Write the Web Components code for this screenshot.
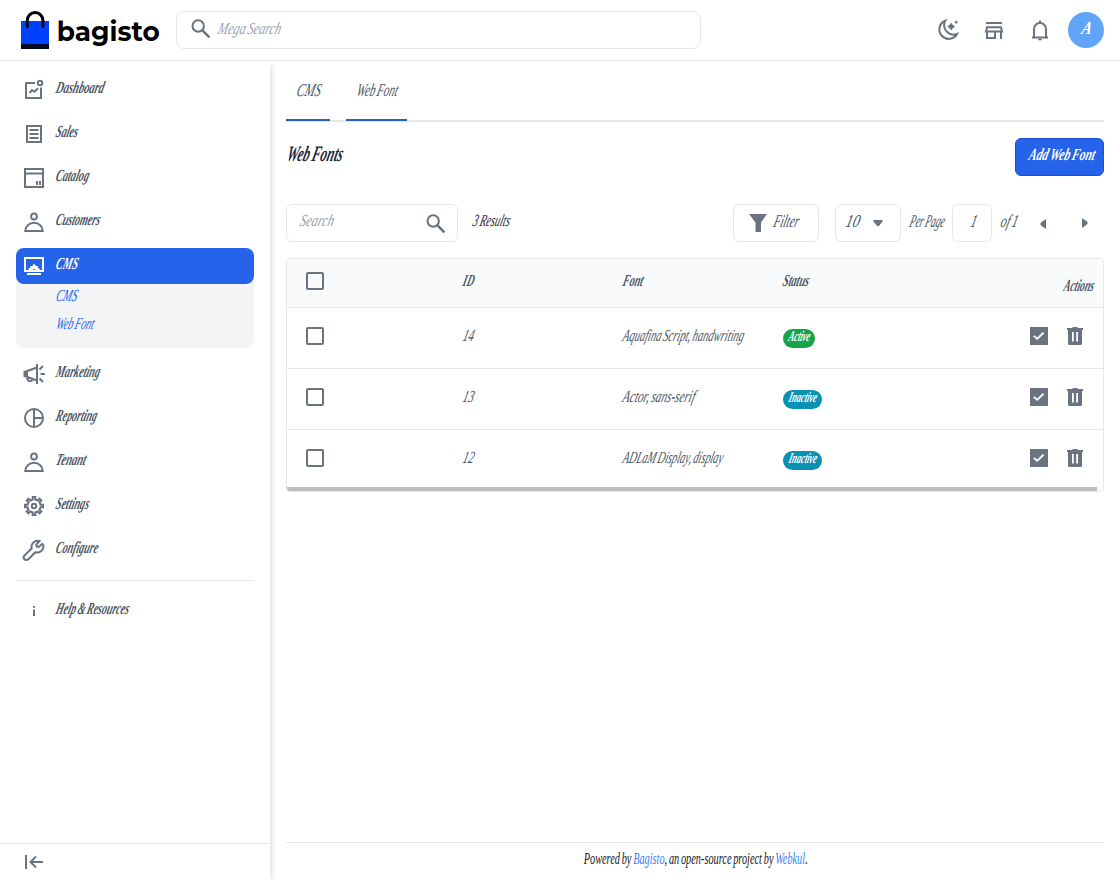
<!DOCTYPE html>
<html lang="en">
<head>
  <meta charset="utf-8">
  <title>Web Fonts</title>
  <style>
    body {
      margin: 0;
      background: #fff;
      color: #4b5563;
      font: italic 17px/24px "Aquafina Script", "Liberation Serif", serif;
    }
  </style>
</head>
<body>
  <admin-page></admin-page>

  <script>
    // icon shapes, all on a 24x24 grid
    const ICONS = {
      search: '<circle cx="9.2" cy="9" r="5.7"/><path d="M13.2 13.2 20.400 20.400" stroke-width="2.600"/>',
      moon: '<path d="M9.200 2.800A9.400 9.400 0 1 0 21 16 9.500 9.500 0 0 1 9.200 2.800z"/><path class="f" d="M15.200 4.600l1.600 2.400 2.400 1.600-2.400 1.600-1.600 2.400-1.600-2.400-2.400-1.600L13.600 7zM20.200 2.600l1.700 1.700-1.700 1.700-1.700-1.700z"/>',
      store: '<path d="M4 5h16M5 9.300h14l1 4.200H4zM5 13.500V20h8v-6.500M19 13.500V21"/>',
      bell: '<path d="M4 19.500h16M6 19.500V11a6 6 0 0 1 12 0v8.500M12 2.500V5"/><path class="f" d="M10 20.800h4a2 1.800 0 0 1-4 0z"/>',
      dashboard: '<path d="M13 5H4.500a.5.500 0 0 0-.5.500V20h15V9.500"/><circle cx="18" cy="5" r="2.200"/><path d="M7.500 15 10 12l2.500 1.800 3.500-3.600"/>',
      sales: '<path d="M5 4h14v16H5zM7.500 8h9M7.500 12h9M7.500 16h9"/>',
      catalog: '<path d="M3 3h18v18H3zM3 7.500h18M15 15v4M18 15v4"/>',
      customers: '<circle cx="12" cy="6.500" r="2.900"/><path d="M3.200 21a8.800 8.200 0 0 1 17.600 0z"/>',
      cms: '<path d="M3 4h18v13H3zM5 20h14"/><path class="f" d="M6.500 16.500v-2l1.500-.8.500-1.700h2l.8-1.700h1.600l.8 1.700h2l.3 1.700 1.500.8v2h-4a1.500 1.500 0 0 0-3 0z"/>',
      marketing: '<path d="M15 2v20M15 5.500 2.500 10v4L15 18.500M5.500 15v2.500c1 2.400 4 2.400 5 0M17.500 7.500 21 4M18.500 12H23M17.500 16.500 21 20"/><path class="f" d="M2 9.500h4v5H2z"/>',
      reporting: '<circle cx="12" cy="12" r="9"/><path d="M12 3v18M12 12h9"/>',
      settings: '<path d="M10.700 3h2.600v2.500l2.500 1L17.600 4.700l1.700 1.700-1.800 1.800 1 2.500H21v2.600h-2.500l-1 2.500 1.800 1.800-1.700 1.700-1.800-1.800-2.500 1V21h-2.600v-2.500l-2.500-1-1.800 1.800-1.700-1.700 1.800-1.800-1-2.500H3v-2.600h2.500l1-2.500L4.700 6.400l1.700-1.700 1.800 1.800 2.500-1z"/><circle cx="12" cy="12" r="2.200"/>',
      configure: '<path d="M20.300 5.800 16.800 9 14.700 8.600 14.300 6.600 17.600 3A6.200 6.200 0 0 0 9.700 10.500L2.500 17.500a2.600 2.600 0 0 0 3.800 3.800L13.400 14.200A6.200 6.200 0 0 0 21.400 8.800c.3-1.500.2-2.400-1.100-3z"/>',
      help: '<path class="f" d="M11 8h2v1.700h-2zM11 11.500h2V18h-2z"/>',
      collapse: '<path d="M4 5v14M8.500 12H21M14 6.500 8.500 12l5.500 5.500"/>',
      filter: '<path class="f" d="M3 3h18l-6 8.500V21H9.500v-9.500z"/>',
      down: '<path class="f" d="M7.500 8h9v1.500L13 14h-2L7.500 9.500z"/>',
      left: '<path class="f" d="M15 7.500v9h-1L9.500 13v-2L14 7.500z"/>',
      right: '<path class="f" d="M9 7.500v9h1l4.500-3.500v-2L10 7.500z"/>',
      edit: '<path class="f" fill-rule="evenodd" d="M3 3h18v18H3zM7.400 11.200l-1.200 1.400 4 3.500 7-6.600-1.300-1.500-5.700 5.400z"/>',
      trash: '<path class="f" fill-rule="evenodd" d="M9.500 3h5v1H20v2h-1v13.500q0 1.500-1.500 1.500h-11Q5 21 5 19.500V6H4V4h5.500zM9 8v9.500h1.800V8zM13.200 8v9.500H15V8z"/>'
    };

    class BgIcon extends HTMLElement {
      constructor() {
        super();
        this.attachShadow({ mode: 'open' }).innerHTML = `
          <style>
            :host { display: block; flex: none; width: 24px; height: 24px; color: var(--icon, #6b7280); }
            svg { display: block; fill: none; stroke: currentColor; stroke-width: 2; }
            .f { fill: currentColor; stroke: none; }
          </style>
          <svg width="24" height="24" viewBox="0 0 24 24">${ICONS[this.getAttribute('name')] || ''}</svg>`;
      }
    }

    // script lettering: squeezed to the width in "w", slanted, and riding a bit above the line
    class FitText extends HTMLElement {
      constructor() {
        super();
        this.attachShadow({ mode: 'open' }).innerHTML = `
          <style>
            :host { display: inline-block; white-space: nowrap; flex: none; text-align: left; }
            span { display: inline-block; transform-origin: 0 60%; word-spacing: -.08em; }
          </style>
          <span><slot></slot></span>`;
      }

      connectedCallback() {
        const span = this.shadowRoot.querySelector('span');
        const w = Number(this.getAttribute('w'));
        const natural = span.getBoundingClientRect().width;
        this.style.width = w + 'px';
        span.style.transform = `translate(.7px, calc(-1 * var(--lift, 2px))) skewX(var(--skew, -14deg)) scaleX(${(w - 1) / natural})`;
      }
    }

    class AdminHeader extends HTMLElement {
      constructor() {
        super();
        this.attachShadow({ mode: 'open' }).innerHTML = `
          <style>
            :host { display: flex; align-items: center; box-sizing: border-box; height: 61px;
              padding: 0 16px 1px 21px; border-bottom: 1px solid #e5e7eb; }
            .logo { display: flex; align-items: center; width: 155px; gap: 7px; }
            .logo svg { flex: none; }
            .name { font: 700 28px/36px Montserrat, Inter, sans-serif; color: #000; --lift: -1px; --skew: 0deg; }
            .search { display: flex; align-items: center; box-sizing: border-box; width: 525px; height: 38px;
              padding-left: 12px; gap: 4px; border: 1px solid #e5e7eb; border-radius: 8px; color: #9ca3af; --lift: 1px; }
            .search bg-icon { margin-top: -1px; }
            .tools { display: flex; align-items: center; margin-left: auto; gap: 22px; }
            .avatar { display: flex; align-items: center; justify-content: center; width: 36px; height: 36px;
              margin-left: -6px; border-radius: 50%; background: #60a5fa; color: #fff; font-size: 18px; font-weight: 700; }
          </style>
          <div class="logo">
            <svg width="28" height="38" viewBox="0 0 28 38">
              <path fill="#0041ff" d="M0 10h28v24H0z"/>
              <path fill="#000a20" d="M0 33h28v5H0z"/>
              <path fill="none" stroke="#000" stroke-width="3" stroke-linecap="round" d="M6.300 15.500V9.500a7.800 8 0 0 1 15.600 0v6"/>
            </svg>
            <fit-text class="name" w="104">bagisto</fit-text>
          </div>
          <div class="search"><bg-icon name="search"></bg-icon><fit-text w="64">Mega Search</fit-text></div>
          <div class="tools">
            <bg-icon name="moon"></bg-icon>
            <bg-icon name="store"></bg-icon>
            <bg-icon name="bell"></bg-icon>
            <div class="avatar"><fit-text w="11">A</fit-text></div>
          </div>`;
      }
    }

    class NavItem extends HTMLElement {
      constructor() {
        super();
        this.attachShadow({ mode: 'open' }).innerHTML = `
          <style>
            :host { display: block; font-weight: 700; }
            .row { display: flex; align-items: center; height: 36px; padding-left: 6px; gap: 9px; border-radius: 8px; }
            :host([active]) .row { background: #2563eb; color: #fff; --icon: #fff; }
            :host([active]) { background: #f3f4f6; border-radius: 8px; }
          </style>
          <div class="row">
            <bg-icon name="${this.getAttribute('icon')}"></bg-icon>
            <fit-text w="${this.getAttribute('w')}">${this.getAttribute('label')}</fit-text>
          </div>
          <slot></slot>`;
      }
    }

    class AdminSidebar extends HTMLElement {
      constructor() {
        super();
        this.attachShadow({ mode: 'open' }).innerHTML = `
          <style>
            :host { display: flex; flex-direction: column; box-sizing: border-box; width: 270px; margin-top: 3px;
              padding-top: 8px; box-shadow: 0 0 8px rgba(0, 0, 0, .2); clip-path: inset(0 -12px 0 0); }
            nav { display: flex; flex-direction: column; gap: 8px; padding: 0 16px; }
            .sub { display: flex; flex-direction: column; height: 64px; padding-left: 39px; font-weight: 400; color: #2563eb;
              line-height: 28px; --lift: 2px; box-sizing: border-box; }
            hr { width: 100%; margin: 4px 0 3px; border: 0; border-top: 1px solid #e5e7eb; }
            .help { --lift: 1px; }
            .foot { display: flex; align-items: center; height: 36px; margin-top: auto; padding-left: 22px;
              border-top: 1px solid #e5e7eb; }
          </style>
          <nav>
            <nav-item icon="dashboard" label="Dashboard" w="49"></nav-item>
            <nav-item icon="sales" label="Sales" w="23"></nav-item>
            <nav-item icon="catalog" label="Catalog" w="34"></nav-item>
            <nav-item icon="customers" label="Customers" w="45"></nav-item>
            <nav-item icon="cms" label="CMS" w="23" active>
              <div class="sub">
                <fit-text w="22">CMS</fit-text>
                <fit-text w="39">Web Font</fit-text>
              </div>
            </nav-item>
            <nav-item icon="marketing" label="Marketing" w="45"></nav-item>
            <nav-item icon="reporting" label="Reporting" w="42"></nav-item>
            <nav-item icon="customers" label="Tenant" w="31"></nav-item>
            <nav-item icon="settings" label="Settings" w="34"></nav-item>
            <nav-item icon="configure" label="Configure" w="43"></nav-item>
            <hr>
            <nav-item class="help" icon="help" label="Help &amp;amp; Resources" w="74"></nav-item>
          </nav>
          <div class="foot"><bg-icon name="collapse"></bg-icon></div>`;
      }
    }

    class PageTabs extends HTMLElement {
      constructor() {
        super();
        this.attachShadow({ mode: 'open' }).innerHTML = `
          <style>
            :host { display: flex; gap: 16px; box-sizing: border-box; height: 61px; border-bottom: 2px solid #e5e5e5; }
            div { box-sizing: border-box; height: 60px; padding: 18px 9px 0 10px; border-bottom: 2px solid #2563b8; font-size: 18px; --lift: 1px; }
          </style>
          <div><fit-text w="25">CMS</fit-text></div>
          <div><fit-text w="42">Web Font</fit-text></div>`;
      }
    }

    class GridToolbar extends HTMLElement {
      constructor() {
        super();
        this.attachShadow({ mode: 'open' }).innerHTML = `
          <style>
            :host { display: flex; align-items: center; height: 38px; }
            .box { display: flex; align-items: center; box-sizing: border-box; height: 38px;
              border: 1px solid #e5e7eb; border-radius: 6px; }
            .search { justify-content: space-between; width: 172px; padding: 0 9px 0 12px; color: #9ca3af; margin-right: 14px; }
            .total { color: #1f2937; }
            .right { display: flex; align-items: center; margin-left: auto; font-size: 18px; }
            .filter { width: 86px; padding-left: 12px; gap: 3px; margin-right: 16px; }
            .limit { width: 66px; padding-left: 9px; gap: 6px; margin-right: 8px; }
            .page { width: 40px; padding-left: 17px; margin: 0 8px 0 7px; }
            .prev { margin-left: 13px; }
            .next { margin: 0 7px 0 18px; }
            bg-icon { margin-top: 1px; }
            .filter bg-icon { margin-top: 0; }
          </style>
          <div class="box search"><fit-text w="35">Search</fit-text><bg-icon name="search"></bg-icon></div>
          <fit-text class="total" w="38">3 Results</fit-text>
          <div class="right">
            <div class="box filter"><bg-icon name="filter"></bg-icon><fit-text w="26">Filter</fit-text></div>
            <div class="box limit"><fit-text w="15">10</fit-text><bg-icon name="down"></bg-icon></div>
            <fit-text w="36">Per Page</fit-text>
            <div class="box page"><fit-text w="7">1</fit-text></div>
            <fit-text w="18">of 1</fit-text>
            <bg-icon class="prev" name="left"></bg-icon>
            <bg-icon class="next" name="right"></bg-icon>
          </div>`;
      }
    }

    class StatusBadge extends HTMLElement {
      constructor() {
        super();
        this.attachShadow({ mode: 'open' }).innerHTML = `
          <style>
            :host { display: flex; width: max-content; height: 19px; margin: 1px 0 0 1px; padding: 0 5px; border-radius: 10px;
              background: #0891b2; color: #fff; font-size: 15px; font-weight: 700; line-height: 19px; --lift: 2px; }
            :host([on]) { background: #16a34a; }
          </style>
          <slot></slot>`;
      }
    }

    class GridRow extends HTMLElement {
      constructor() {
        super();
        this.attachShadow({ mode: 'open' }).innerHTML = `
          <style>
            :host { display: grid; grid-template-columns: repeat(3, 160px) 160px 1fr; align-items: center;
              box-sizing: border-box; height: 61px; padding: 0 16px 0 15px; border-bottom: 1px solid #e5e7eb; --lift: 2px; }
            :host([head]) { height: 49px; background: #f9fafb; font-weight: 700; padding-right: 9px; }
            :host([last]) { height: 58px; border-bottom: 0; }
            .check { box-sizing: border-box; width: 18px; height: 18px; margin: -4px 0 0 4px; border: 2px solid #6b7280; border-radius: 2px; }
            :host([last]) .check { margin-top: -2px; }
            ::slotted([slot=end]) { justify-self: end; }
          </style>
          <div class="check"></div>
          <slot></slot>
          <slot name="end"></slot>`;
      }
    }

    class FontGrid extends HTMLElement {
      constructor() {
        super();
        const rows = [
          ['14', 12, 'Aquafina Script, handwriting', 122, 'Active', 22],
          ['13', 12, 'Actor, sans-serif', 73, 'Inactive', 29],
          ['12', 12, 'ADLaM Display, display', 101, 'Inactive', 29]
        ];
        this.attachShadow({ mode: 'open' }).innerHTML = `
          <style>
            :host { display: block; border: 1px solid #e5e7eb; border-radius: 4px; overflow: hidden; }
            .tools { display: flex; gap: 12px; margin: -4px 0 0; }
            grid-row[last] .tools { margin-top: -2px; }
            grid-row[last] > fit-text { --lift: 1px; }
            grid-row[last] status-badge { margin-top: 3px; }
            .actions { margin-top: 9px; }
            .bar { width: 810px; height: 4px; margin-top: -1px; background: #bdbdbd; }
          </style>
          <grid-row head>
            <fit-text w="12">ID</fit-text>
            <fit-text w="21">Font</fit-text>
            <fit-text w="27">Status</fit-text>
            <fit-text slot="end" class="actions" w="31">Actions</fit-text>
          </grid-row>
          ${rows.map(([id, idW, font, fontW, status, statusW], i) => `
            <grid-row ${i === rows.length - 1 ? 'last' : ''}>
              <fit-text w="${idW}">${id}</fit-text>
              <fit-text w="${fontW}">${font}</fit-text>
              <status-badge ${status === 'Active' ? 'on' : ''}><fit-text w="${statusW}">${status}</fit-text></status-badge>
              <div slot="end" class="tools"><bg-icon name="edit"></bg-icon><bg-icon name="trash"></bg-icon></div>
            </grid-row>`).join('')}
          <div class="bar"></div>`;
      }
    }

    class AdminFooter extends HTMLElement {
      constructor() {
        super();
        this.attachShadow({ mode: 'open' }).innerHTML = `
          <style>
            :host { display: block; height: 37px; border-top: 1px solid #e5e7eb; color: #111827; text-align: center;
              line-height: 38px; font-size: 17px; --lift: 3px; --skew: 0deg; }
            a { color: #3b82f6; }
          </style>
          <fit-text w="225">Powered by <a>Bagisto</a>, an open-source project by <a>Webkul</a>.</fit-text>`;
      }
    }

    class AdminPage extends HTMLElement {
      constructor() {
        super();
        this.attachShadow({ mode: 'open' }).innerHTML = `
          <style>
            :host { display: flex; flex-direction: column; height: 880px; overflow: hidden; }
            .body { display: flex; flex: 1; min-height: 0; }
            main { display: flex; flex: 1; flex-direction: column; padding: 0 16px; }
            .title { display: flex; align-items: center; justify-content: space-between; height: 38px; margin: 16px 0 28px; }
            h1 { margin: 0; font-size: 22px; line-height: 28px; color: #1f2937; --lift: 3px; }
            .add { display: flex; align-items: center; box-sizing: border-box; height: 38px; padding: 0 8px 0 12px;
              border: 1px solid #1d4ed8; border-radius: 6px; background: #2563eb; color: #fff; font-weight: 700; }
            font-grid { margin-top: 16px; }
            admin-footer { margin-top: auto; }
          </style>
          <admin-header></admin-header>
          <div class="body">
            <admin-sidebar></admin-sidebar>
            <main>
              <page-tabs></page-tabs>
              <div class="title">
                <h1><fit-text w="57">Web Fonts</fit-text></h1>
                <div class="add"><fit-text w="67">Add Web Font</fit-text></div>
              </div>
              <grid-toolbar></grid-toolbar>
              <font-grid></font-grid>
              <admin-footer></admin-footer>
            </main>
          </div>`;
      }
    }

    customElements.define('admin-page', AdminPage);
    customElements.define('admin-header', AdminHeader);
    customElements.define('nav-item', NavItem);
    customElements.define('admin-sidebar', AdminSidebar);
    customElements.define('page-tabs', PageTabs);
    customElements.define('grid-toolbar', GridToolbar);
    customElements.define('status-badge', StatusBadge);
    customElements.define('grid-row', GridRow);
    customElements.define('font-grid', FontGrid);
    customElements.define('admin-footer', AdminFooter);
    customElements.define('bg-icon', BgIcon);
    // last, so that it measures text inside a finished tree
    customElements.define('fit-text', FitText);
  </script>
</body>
</html>
